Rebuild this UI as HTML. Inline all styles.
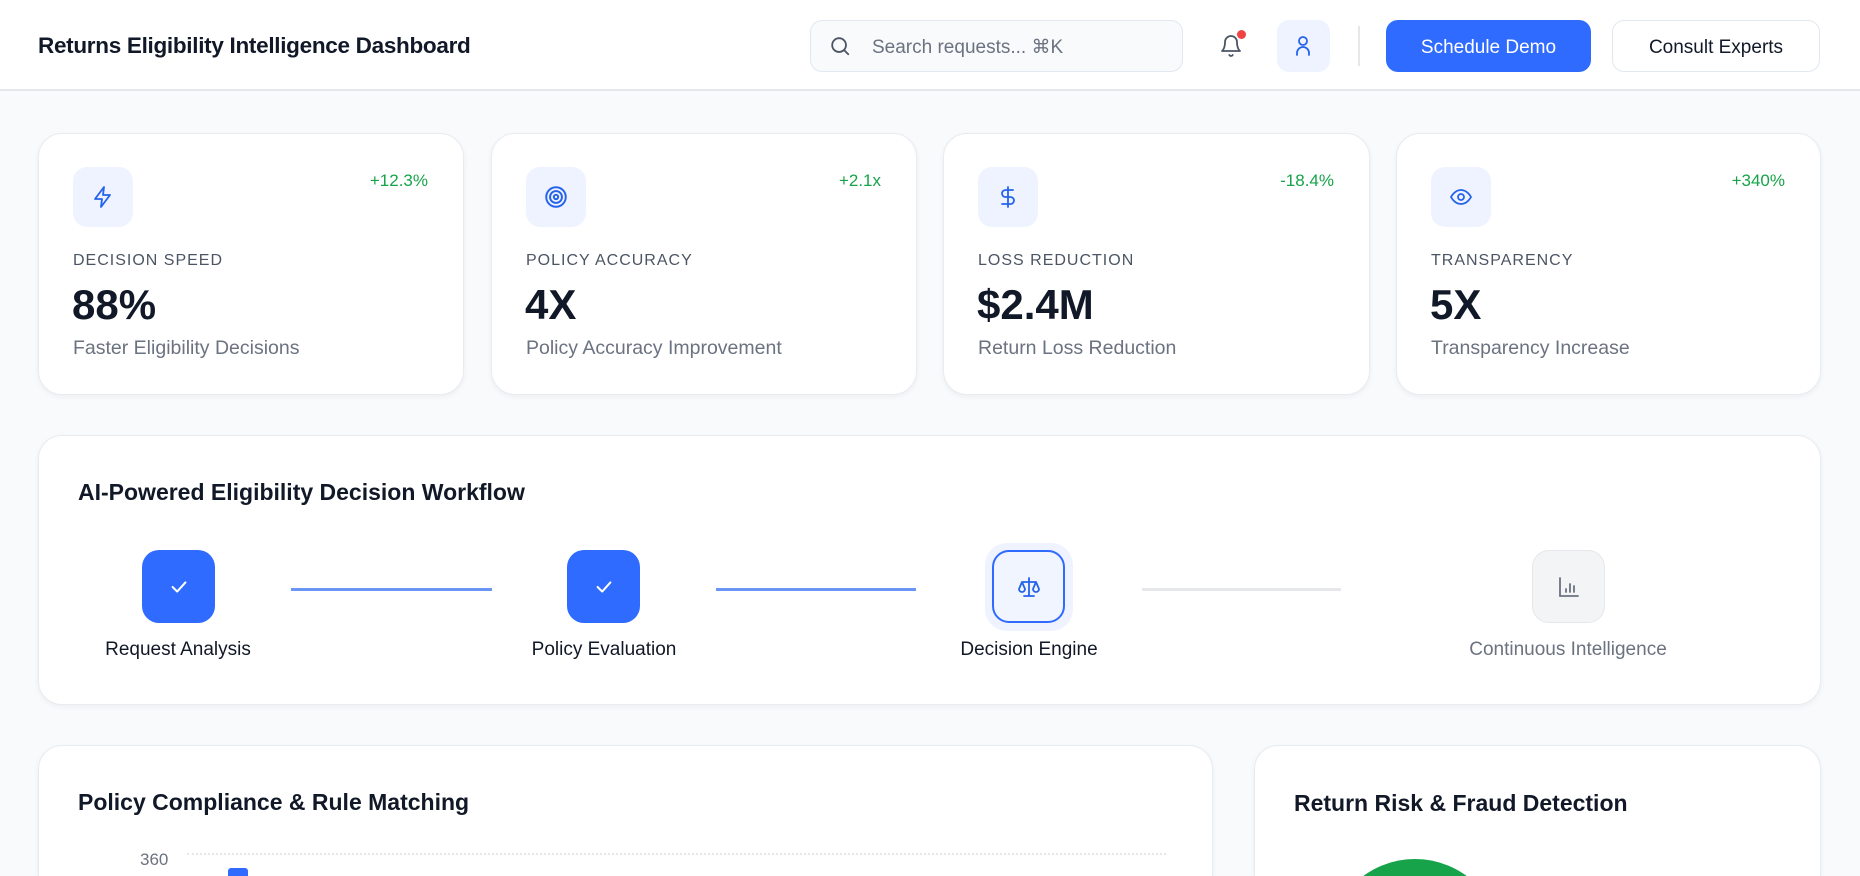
<!DOCTYPE html>
<html><head><meta charset="utf-8"><style>
*{box-sizing:border-box;margin:0;padding:0}
html,body{overflow:hidden}
body{width:1860px;height:876px;background:#f8fafc;font-family:"Liberation Sans",sans-serif;color:#111827;position:relative}
.abs{position:absolute}
.hdr{left:0;top:0;width:1860px;height:91px;background:#fff;border-bottom:2px solid #e5e7eb}
.card{position:absolute;background:#fff;border:1px solid #e8ebf0;border-radius:24px;box-shadow:0 2px 6px rgba(15,23,42,.05)}
.ib{position:absolute;left:34px;top:33px;width:60px;height:60px;border-radius:14px;background:#eef3ff;display:flex;align-items:center;justify-content:center}
.badge{position:absolute;right:35px;top:170px;color:#16a34a;font-size:17px}
.lbl{position:absolute;left:34px;top:118px;font-size:16px;letter-spacing:1px;color:#4b5563}
.num{position:absolute;left:33px;top:147px;font-size:42px;font-weight:700;color:#111827}
.sub{position:absolute;left:34px;top:203px;font-size:19.5px;color:#6b7280}
.step{position:absolute;top:550px;width:73px;height:73px;border-radius:17px;display:flex;align-items:center;justify-content:center}
.sl{position:absolute;top:639px;font-size:19px;width:300px;text-align:center}
.ln{position:absolute;top:588px;height:3px}
.tt{font-size:23px;font-weight:600}
.btn{padding-top:3px}
</style></head><body>
<div class="abs hdr"></div>
<div class="abs" style="left:38px;top:33px;font-size:22.5px;font-weight:700;letter-spacing:-.3px">Returns Eligibility Intelligence Dashboard</div>
<div class="abs" style="left:810px;top:20px;width:373px;height:52px;border:1.5px solid #e2e8f0;border-radius:12px;background:#f8fafc"></div>
<svg class="abs" style="left:829px;top:35px" width="22" height="22" viewBox="0 0 24 24" fill="none" stroke="#4b5563" stroke-width="2" stroke-linecap="round"><circle cx="11" cy="11" r="7.5"/><path d="M21 21l-4.5-4.5"/></svg>
<div class="abs" style="left:872px;top:36px;font-size:19px;color:#6b7280">Search requests... ⌘K</div>
<svg class="abs" style="left:1219px;top:34px" width="24" height="24" viewBox="0 0 24 24" fill="none" stroke="#4b5563" stroke-width="1.8" stroke-linecap="round" stroke-linejoin="round"><path d="M6 8a6 6 0 0 1 12 0c0 7 3 9 3 9H3s3-2 3-9"/><path d="M10.3 21a1.94 1.94 0 0 0 3.4 0"/></svg>
<div class="abs" style="left:1237px;top:30px;width:9px;height:9px;border-radius:50%;background:#ef4444"></div>
<div class="abs" style="left:1277px;top:20px;width:53px;height:52px;border-radius:12px;background:#eef3ff"></div>
<svg class="abs" style="left:1291px;top:34px" width="24" height="24" viewBox="0 0 24 24" fill="none" stroke="#2563eb" stroke-width="1.8" stroke-linecap="round"><circle cx="12" cy="7" r="4"/><path d="M5 21v-2a6 6 0 0 1 12 0v2" transform="translate(1 0)"/></svg>
<div class="abs" style="left:1358px;top:26px;width:2px;height:40px;background:#e5e7eb"></div>
<div class="abs btn" style="left:1386px;top:20px;width:205px;height:52px;border-radius:12px;background:#2f6bff;color:#fff;font-size:19px;font-weight:500;display:flex;align-items:center;justify-content:center">Schedule Demo</div>
<div class="abs btn" style="left:1612px;top:20px;width:208px;height:52px;border-radius:12px;background:#fff;border:1.5px solid #e2e8f0;font-size:19px;display:flex;align-items:center;justify-content:center">Consult Experts</div>

<div class="card" style="left:38px;top:133px;width:426px;height:262px">
<div class="ib"><svg width="24" height="24" viewBox="0 0 24 24" fill="none" stroke="#2563eb" stroke-width="1.8" stroke-linejoin="round"><path d="M13 2L4 14h7l-1 8 9-12h-7l1-8z"/></svg></div>
<div class="badge" style="top:37px">+12.3%</div><div class="lbl">DECISION SPEED</div><div class="num">88%</div><div class="sub">Faster Eligibility Decisions</div></div>
<div class="card" style="left:491px;top:133px;width:426px;height:262px">
<div class="ib"><svg width="26" height="26" viewBox="0 0 24 24" fill="none" stroke="#2563eb" stroke-width="1.8"><circle cx="12" cy="12" r="9"/><circle cx="12" cy="12" r="5.5"/><circle cx="12" cy="12" r="2"/></svg></div>
<div class="badge" style="top:37px">+2.1x</div><div class="lbl">POLICY ACCURACY</div><div class="num">4X</div><div class="sub">Policy Accuracy Improvement</div></div>
<div class="card" style="left:943px;top:133px;width:427px;height:262px">
<div class="ib"><svg width="24" height="24" viewBox="0 0 24 24" fill="none" stroke="#2563eb" stroke-width="1.8" stroke-linecap="round"><path d="M12 2v20M17 5H9.5a3.5 3.5 0 0 0 0 7h5a3.5 3.5 0 0 1 0 7H6"/></svg></div>
<div class="badge" style="top:37px">-18.4%</div><div class="lbl">LOSS REDUCTION</div><div class="num">$2.4M</div><div class="sub">Return Loss Reduction</div></div>
<div class="card" style="left:1396px;top:133px;width:425px;height:262px">
<div class="ib"><svg width="24" height="24" viewBox="0 0 24 24" fill="none" stroke="#2563eb" stroke-width="1.8"><path d="M2 12s3.5-7 10-7 10 7 10 7-3.5 7-10 7S2 12 2 12z"/><circle cx="12" cy="12" r="3"/></svg></div>
<div class="badge" style="top:37px">+340%</div><div class="lbl">TRANSPARENCY</div><div class="num">5X</div><div class="sub">Transparency Increase</div></div>

<div class="card" style="left:38px;top:435px;width:1783px;height:270px"></div>
<div class="abs tt" style="left:78px;top:479px">AI-Powered Eligibility Decision Workflow</div>
<div class="ln" style="left:291px;width:201px;background:#6b95f5"></div>
<div class="ln" style="left:716px;width:200px;background:#6b95f5"></div>
<div class="ln" style="left:1142px;width:199px;background:#e5e7eb"></div>
<div class="step" style="left:142px;background:#2f6bff"><svg width="22" height="22" viewBox="0 0 24 24" fill="none" stroke="#fff" stroke-width="2.2" stroke-linecap="round" stroke-linejoin="round"><path d="M5 12l5 5 9-10"/></svg></div>
<div class="step" style="left:567px;background:#2f6bff"><svg width="22" height="22" viewBox="0 0 24 24" fill="none" stroke="#fff" stroke-width="2.2" stroke-linecap="round" stroke-linejoin="round"><path d="M5 12l5 5 9-10"/></svg></div>
<div class="abs" style="left:985px;top:543px;width:88px;height:88px;border-radius:22px;background:#eef3ff"></div>
<div class="step" style="left:992px;background:#f0f5ff;border:2px solid #2f6bff"><svg width="24" height="24" viewBox="0 0 24 24" fill="none" stroke="#2563eb" stroke-width="1.8" stroke-linecap="round" stroke-linejoin="round"><path d="M12 3v18M7 21h10M5 7h14M5 7l-3 7a3 3 0 0 0 6 0L5 7M19 7l-3 7a3 3 0 0 0 6 0l-3-7"/></svg></div>
<div class="step" style="left:1532px;background:#f3f4f6;border:1.5px solid #e5e7eb"><svg width="24" height="24" viewBox="0 0 24 24" fill="none" stroke="#6b7280" stroke-width="1.8" stroke-linecap="round"><path d="M3 3v18h18M9 17v-3M13 17V9M17 17v-6"/></svg></div>
<div class="sl" style="left:28px">Request Analysis</div>
<div class="sl" style="left:454px">Policy Evaluation</div>
<div class="sl" style="left:879px">Decision Engine</div>
<div class="sl" style="left:1418px;color:#6b7280">Continuous Intelligence</div>

<div class="card" style="left:38px;top:745px;width:1175px;height:131px;border-bottom:none;border-radius:24px 24px 0 0"></div>
<div class="abs tt" style="left:78px;top:789px">Policy Compliance &amp; Rule Matching</div>
<div class="abs" style="left:140px;top:850px;font-size:17px;color:#6b7280">360</div>
<div class="abs" style="left:187px;top:853px;width:979px;border-top:2px dotted #e5e7eb"></div>
<div class="abs" style="left:228px;top:868px;width:20px;height:8px;border-radius:3px 3px 0 0;background:#2f6bff"></div>
<div class="card" style="left:1254px;top:745px;width:567px;height:131px;overflow:hidden;border-bottom:none;border-radius:24px 24px 0 0">
<div class="abs tt" style="left:39px;top:44px">Return Risk &amp; Fraud Detection</div>
<div class="abs" style="left:73px;top:113px;width:174px;height:174px;border-radius:50%;background:#16a34a"></div></div>
</body></html>
